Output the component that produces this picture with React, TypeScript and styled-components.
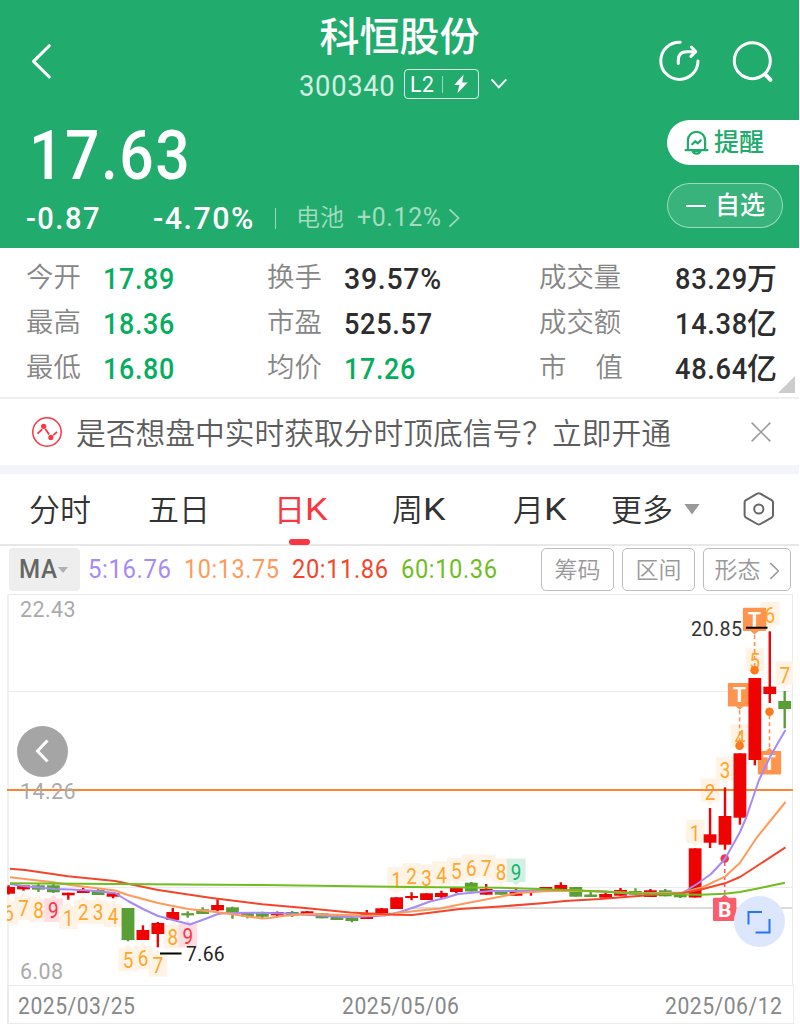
import React, { useLayoutEffect, useRef, useState } from 'react';
import styled, { createGlobalStyle } from 'styled-components';

const FONT = "Roboto, 'Noto Sans CJK SC', sans-serif";
const GREEN = '#21ab6d';

const GlobalStyle = createGlobalStyle`
  *, *::before, *::after { box-sizing: border-box; }
  body { margin: 0; background: #fff; font-family: ${FONT}; }
`;

/* ---------- condensed text ---------- */

const FitBox = styled.span<{ $w: number; $size: number; $weight: number; $color: string }>`
  display: inline-block;
  flex: none;
  width: ${(p) => p.$w}px;
  font-size: ${(p) => p.$size}px;
  font-weight: ${(p) => p.$weight};
  line-height: ${(p) => Math.round(p.$size * 1.2)}px;
  color: ${(p) => p.$color};
  white-space: nowrap;
`;

const FitInner = styled.span<{ $gap: number }>`
  display: inline-block;
  letter-spacing: ${(p) => p.$gap}px;
  transform-origin: 0 50%;
`;

interface FitProps {
  w: number;
  size: number;
  weight?: number;
  color?: string;
  spacing?: number;
  children: React.ReactNode;
}

/* Squeezes its text horizontally so that it fills exactly `w` pixels. */
function Fit({ w, size, weight = 400, color = 'inherit', spacing = 0.025, children }: FitProps) {
  const ref = useRef<HTMLSpanElement>(null);
  const [scale, setScale] = useState(1);
  const gap = spacing * size;
  useLayoutEffect(() => {
    if (ref.current && ref.current.offsetWidth) setScale(w / (ref.current.offsetWidth - gap));
  }, [w, gap]);
  return (
    <FitBox $w={w} $size={size} $weight={weight} $color={color}>
      <FitInner ref={ref} $gap={gap} style={{ transform: `scaleX(${scale})` }}>
        {children}
      </FitInner>
    </FitBox>
  );
}

/* ---------- page ---------- */

const Page = styled.main`
  width: 799px;
  height: 1024px;
  overflow: hidden;
  display: flex;
  flex-direction: column;
  background: #fff;
`;

const Header = styled.header`
  height: 248px;
  flex: none;
  background: ${GREEN};
  color: #fff;
`;

const TopBar = styled.div`
  height: 112px;
  display: grid;
  grid-template-columns: 1fr 210px 1fr;
  padding: 0 24px 0 28px;
`;

const BackSlot = styled.div`
  padding-top: 42px;
`;

const TitleBlock = styled.div`
  display: flex;
  flex-direction: column;
  align-items: flex-start;
  padding-left: 2px;
`;

const StockName = styled.h1`
  margin: 15px 0 0 21px;
  font-size: 40px;
  line-height: 46px;
  font-weight: 500;
  white-space: nowrap;
`;

const CodeRow = styled.div`
  display: flex;
  align-items: center;
  height: 30px;
  margin-top: 8px;
`;

const StockCode = styled.span`
  margin-top: 3px;
`;

const LevelBadge = styled.span`
  display: flex;
  align-items: center;
  width: 75px;
  height: 30px;
  margin: 0 11px 0 9px;
  padding-left: 5px;
  border: 1px solid rgba(255, 255, 255, 0.85);
  border-radius: 4px;
`;

const TopActions = styled.div`
  display: flex;
  justify-content: flex-end;
  gap: 28px;
  padding-top: 38px;
`;

const QuoteArea = styled.div`
  display: flex;
  justify-content: space-between;
`;

const PriceBlock = styled.div`
  display: flex;
  flex-direction: column;
`;

const PriceLine = styled.div`
  height: 84px;
  padding: 2px 0 0 29px;
`;

const ChangeLine = styled.div`
  display: flex;
  align-items: center;
  height: 44px;
  padding-left: 26px;
`;

const Change = styled.span`
  width: 127px;
`;

const ThinBar = styled.i<{ $h: number; $ml: number; $mr: number }>`
  width: 1px;
  height: ${(p) => p.$h}px;
  margin: 0 ${(p) => p.$mr}px 0 ${(p) => p.$ml}px;
  background: rgba(255, 255, 255, 0.55);
`;

const Sector = styled.span`
  display: flex;
  align-items: center;
  gap: 13px;
  margin-right: 7px;
  color: #a3dcc1;
`;

const SectorName = styled.span`
  font-size: 24px;
  line-height: 30px;
  font-weight: 350;
  margin-top: -1px;
`;

const PillColumn = styled.div`
  display: flex;
  flex-direction: column;
  gap: 18px;
  width: 132px;
  padding-top: 8px;
`;

const Pill = styled.button<{ $solid?: boolean }>`
  display: flex;
  align-items: center;
  width: ${(p) => (p.$solid ? 132 : 116)}px;
  height: 45px;
  padding: 0 0 0 ${(p) => (p.$solid ? 17 : 18)}px;
  gap: ${(p) => (p.$solid ? 5 : 9)}px;
  border: ${(p) => (p.$solid ? 'none' : '1px solid rgba(255,255,255,0.5)')};
  border-radius: ${(p) => (p.$solid ? '23px 0 0 23px' : '23px')};
  background: ${(p) => (p.$solid ? '#fff' : 'rgba(255,255,255,0.1)')};
  color: ${(p) => (p.$solid ? GREEN : '#fff')};
  font: 500 25px/45px ${FONT};
  white-space: nowrap;
`;

/* ---------- statistics ---------- */

const Stats = styled.section`
  position: relative;
  display: grid;
  grid-template-columns: 241px 272px 240px;
  grid-auto-rows: 45px;
  height: 151px;
  flex: none;
  padding: 8px 0 0 26px;
  border-bottom: 2px solid #efefef;
`;

const Stat = styled.div`
  display: flex;
  align-items: center;
`;

const StatLabel = styled.span<{ $wide?: boolean }>`
  display: flex;
  justify-content: space-between;
  width: ${(p) => (p.$wide ? 84 : 55)}px;
  margin-top: -1px;
  font-size: 27.4px;
  line-height: 36px;
  font-weight: 350;
  color: #868686;
`;

const StatValue = styled.span<{ $right?: boolean; $down?: boolean }>`
  display: flex;
  align-items: center;
  margin-left: ${(p) => (p.$right ? 52 : 22)}px;
  color: ${(p) => (p.$down ? '#07ad5e' : '#2d2d2d')};
  font-size: 30px;
  line-height: 36px;
  font-weight: 500;
`;

const Corner = styled.i`
  position: absolute;
  right: 4px;
  bottom: 4px;
  width: 17px;
  height: 17px;
  background: #ccc;
  clip-path: polygon(100% 0, 100% 100%, 0 100%);
`;

/* ---------- notice ---------- */

const Notice = styled.section`
  display: flex;
  align-items: center;
  height: 75px;
  flex: none;
  padding: 0 27px 0 31px;
  border-bottom: 9px solid #f2f4f9;
`;

const NoticeText = styled.p`
  margin: 3px auto 0 13px;
  font-size: 29.75px;
  line-height: 40px;
  font-weight: 350;
  color: #5c5c5c;
  white-space: nowrap;
`;

/* ---------- tabs ---------- */

const Tabs = styled.nav`
  display: grid;
  grid-template-columns: 119px 126px 118px 121px 98px 1fr 34px;
  height: 72px;
  flex: none;
  padding: 0 23px 0 29px;
  border-bottom: 2px solid #e8e8e8;
`;

const Tab = styled.span<{ $active?: boolean }>`
  position: relative;
  display: flex;
  align-items: center;
  height: 70px;
  font-size: 31px;
  font-weight: ${(p) => (p.$active ? 400 : 350)};
  color: ${(p) => (p.$active ? '#f93641' : '#333')};
  white-space: nowrap;
`;

const Underline = styled.i`
  position: absolute;
  left: 15px;
  bottom: -1px;
  width: 21px;
  height: 6px;
  border-radius: 3px;
  background: #f93641;
`;

const TabLabel = styled.span`
  line-height: 40px;
  margin-top: 3px;
`;

const Down = styled.i<{ $w: number; $h: number; $ml: number; $color: string }>`
  width: ${(p) => p.$w}px;
  height: ${(p) => p.$h}px;
  margin-left: ${(p) => p.$ml}px;
  background: ${(p) => p.$color};
  clip-path: polygon(0 0, 100% 0, 50% 100%);
`;

/* ---------- indicator row ---------- */

const Indicators = styled.div`
  display: flex;
  align-items: center;
  height: 48px;
  flex: none;
  padding: 0 8px 2px 9px;
`;

const MaButton = styled.span`
  display: flex;
  align-items: center;
  width: 71px;
  height: 43px;
  margin-right: 8px;
  padding: 2px 0 0 10px;
  border-radius: 4px;
  background: #eee;
`;

const MaValues = styled.div`
  display: flex;
  gap: 13px;
  flex: 1;
  padding-top: 1px;
`;

const Tools = styled.div`
  display: flex;
  gap: 8px;
`;

const Tool = styled.button<{ $w: number }>`
  display: flex;
  align-items: center;
  justify-content: center;
  gap: 8px;
  width: ${(p) => p.$w}px;
  height: 43px;
  padding: 3px 0 0;
  border: 1.5px solid #bdbdbd;
  border-radius: 5px;
  background: #fff;
  font: 350 23px/38px ${FONT};
  color: #999;
  white-space: nowrap;
`;

/* ---------- chart ---------- */

const ChartArea = styled.section`
  position: relative;
  height: 391px;
  flex: none;
`;

const RoundButton = styled.button<{ $x: number; $y: number; $bg: string }>`
  position: absolute;
  left: ${(p) => p.$x}px;
  top: ${(p) => p.$y}px;
  display: grid;
  place-items: center;
  width: 51px;
  height: 51px;
  padding: 0;
  border: none;
  border-radius: 50%;
  background: ${(p) => p.$bg};
`;

const DateRow = styled.div`
  display: flex;
  align-items: center;
  justify-content: space-between;
  height: 39px;
  margin: 0 5px 0 7px;
  padding: 3px 11px 0 9px;
  border: 1px solid #ebebeb;
  border-left-width: 2px;
`;

type Candle = [up: 0 | 1, top: number, bottom: number, high: number, low: number];

const candles: Candle[] = [
  [1, 887, 893.7, 885.3, 894.5], [1, 885.3, 889.3, 885, 890.7], [0, 885.3, 889.7, 883.3, 892],
  [0, 885.3, 892.3, 882.3, 893], [1, 892.7, 895.3, 892.7, 899.7], [1, 890.7, 893, 887.7, 893],
  [0, 890, 895, 889, 895], [1, 893.3, 896.7, 893, 898.3], [0, 908, 940, 908, 941.3],
  [1, 930, 940, 925.3, 940], [1, 923, 934, 922, 947.3], [1, 912, 920, 908, 920],
  [0, 913.2, 915.4, 911.3, 917.7], [0, 909.3, 914, 907.3, 914], [1, 905, 910.3, 899.3, 911],
  [0, 907.3, 912.7, 906.7, 918.7], [0, 912.7, 916.7, 912, 918.3], [0, 913.3, 916.7, 911.7, 918.7],
  [1, 912, 915.3, 911.5, 917.3], [0, 912, 915.7, 911, 917], [1, 911.3, 914.7, 911, 915],
  [0, 913.3, 918.3, 913, 918.3], [0, 915.7, 920, 915, 920], [0, 917.7, 921, 917, 922.3],
  [1, 914, 919, 910, 919], [1, 908.3, 913.3, 908, 914.7], [1, 897.3, 909, 897.3, 909],
  [1, 896, 898, 892.3, 900.3], [1, 893.3, 900, 893.3, 900], [1, 893, 897, 890.7, 898.3],
  [1, 887.7, 892, 887.7, 893.3], [0, 882.7, 891.5, 882, 891.5], [1, 889, 894.7, 884, 894.7],
  [0, 890.3, 894.7, 890, 894.7], [1, 890, 895.7, 887.7, 895.7], [1, 891, 893, 891, 895.7],
  [1, 887, 889.3, 887, 889.3], [1, 885, 889.3, 882.3, 889.3], [0, 887, 896.7, 887, 896.7],
  [0, 894.5, 897, 890.7, 897], [1, 894, 897.7, 892.7, 897.7], [1, 890, 895.7, 888, 895.7],
  [0, 891, 894.7, 888.3, 894.7], [1, 890.3, 897, 889, 897], [0, 890.3, 896.3, 889, 896.3],
  [0, 894.3, 897.3, 894, 898], [1, 848.3, 897.5, 848.3, 897.5], [1, 834.3, 842.7, 808, 848],
  [1, 816, 844.7, 787.3, 849.7], [1, 753.3, 817.7, 753.3, 824.7], [1, 678, 760, 678, 765.3],
  [1, 686.7, 694, 631.3, 703], [0, 701, 709, 691, 728.3],
];

const candleX = (i: number) => 8.6 + 14.925 * i;

const averages = [
  {
    color: '#a58af8',
    points:
      '10,884 23,886 55,889 70,889.5 90,890.5 115,893 128,901 143,909 158,916 175,920.5 190,924.5 205,919 218,914 228,913 262,912.7 285,913.5 310,915 345,917 365,916.5 385,915.5 400,912 415,907 430,901.5 445,898 458,894 475,892.5 490,891 545,891 600,891 628,893.5 683,892.5 697,884 711,874 725,859 740,832 746,818 759,780 771,755 785.5,730',
  },
  {
    color: '#ff9a5a',
    points:
      '10,877.3 55,882.5 70,885 115,890.5 128,895 158,903 188,909 218,912.3 245,916 262,918.5 270,918 282,916 308,914 345,915 365,915.5 385,914.7 415,911 440,908.5 470,902.5 500,896.7 518,893 545,891.3 575,890.8 600,891.5 650,893.5 682,892.7 703,887 725,876.7 740,862.7 757,837.3 785.5,802',
  },
  {
    color: '#f4452a',
    points:
      '10,868.7 25,870 68,876.3 115,881 158,890 210,897.7 262,904.3 305,908 350,912.5 395,914.7 412,915 440,911.5 460,909 500,906.5 545,903 565,901 600,899 625,897 655,894.7 682,893.3 703,889 725,883.3 740,877 757,866 785.5,847.3',
  },
  {
    color: '#6ebe1e',
    points: '10,883.3 262,885 410,887 500,887.7 545,889.3 580,890.5 640,893.5 700,894.7 725,893.7 740,892 765,887 785,882.7',
  },
];

type Tone = 'o' | 'r' | 'g';
type Tag = [index: number, label: string, y: number, above: 0 | 1, tone?: Tone];

const tags: Tag[] = [
  [0, '6', 913.5, 0], [1, '7', 908.7, 0], [2, '8', 910.7, 0], [3, '9', 910.7, 0, 'r'],
  [4, '1', 918, 0], [5, '2', 912.2, 0], [6, '3', 912.7, 0], [7, '4', 916, 0],
  [8, '5', 960, 0], [9, '6', 958.3, 0], [10, '7', 965.5, 0], [11, '8', 937.3, 0], [12, '9', 936, 0, 'r'],
  [26, '1', 880.8, 1], [27, '2', 876.7, 1], [28, '3', 878, 1], [29, '4', 875, 1], [30, '5', 871.3, 1],
  [31, '6', 868, 1], [32, '7', 868, 1], [33, '8', 872.3, 1], [34, '9', 872.3, 1, 'g'],
  [46, '1', 833.3, 1], [47, '2', 792.3, 1], [48, '3', 770.7, 1], [49, '4', 738, 1],
  [50, '5', 661.5, 1], [51, '6', 615.7, 1], [52, '7', 675, 1],
];

const tones: Record<Tone, { fg: string; bg: string }> = {
  o: { fg: '#ffa62b', bg: '#fff3e6' },
  r: { fg: '#f9364a', bg: '#ffdde0' },
  g: { fg: '#17b36b', bg: '#d2f0e2' },
};

function CountTag({ tag: [index, label, y, above, tone = 'o'] }: { tag: Tag }) {
  const x = candleX(index);
  const mid = above ? y - 2 : y - 0.5;
  const tip = above
    ? `M${x - 4} ${mid + 11.5}h8l-4 4z`
    : `M${x - 4} ${mid - 11.5}h8l-4 -4z`;
  return (
    <g>
      <rect x={x - 9.3} y={mid - 11.7} width={18.8} height={23.4} fill={tones[tone].bg} />
      <path d={tip} fill={tones[tone].bg} />
      <text
        x={x - 5.3}
        y={y + 7.6}
        fontSize={21.5}
        textLength={10.6}
        lengthAdjust="spacingAndGlyphs"
        fill={tones[tone].fg}
      >
        {label}
      </text>
    </g>
  );
}

interface TradeProps {
  x: number;
  y: number;
  dotY: number;
  label: string;
  color: string;
  dot: string;
}

function TradeMark({ x, y, dotY, label, color, dot }: TradeProps) {
  const below = dotY > y;
  const edge = below ? y + 11.5 : y - 11.5;
  return (
    <g>
      <line x1={x} y1={edge + (below ? 4 : -4)} x2={x} y2={dotY} stroke={color} strokeWidth={1.6} strokeDasharray="4 3" />
      <rect x={x - 11.7} y={y - 11.7} width={23.4} height={23.4} rx={1} fill={color} />
      <path d={below ? `M${x - 4} ${edge}h8l-4 3.5z` : `M${x - 4} ${edge}h8l-4 -3.5z`} fill={color} />
      <text x={x} y={y + 7.4} fontSize={21} fontWeight={700} textAnchor="middle" fill="#fff">
        {label}
      </text>
      <circle cx={x} cy={dotY} r={4.3} fill={dot} />
    </g>
  );
}

interface ChartTextProps {
  x: number;
  y: number;
  w: number;
  size: number;
  color: string;
  children: string;
}

function ChartText({ x, y, w, size, color, children }: ChartTextProps) {
  return (
    <text
      x={x}
      y={y}
      fontSize={size}
      letterSpacing={size * 0.02}
      textLength={w}
      lengthAdjust="spacingAndGlyphs"
      fill={color}
    >
      {children}
    </text>
  );
}

function KLineChart() {
  return (
    <svg width="799" height="391" viewBox="0 594 799 391" fontFamily={FONT} style={{ display: 'block' }}>
      <defs>
        <clipPath id="plot">
          <rect x="7" y="594" width="786" height="391" />
        </clipPath>
      </defs>
      <path d="M7 594.5H793M7 691.5H793M7 887.5H793" stroke="#ebebeb" fill="none" />
      <path d="M8 594V985" stroke="#f0f0f0" strokeWidth="2" />
      <path d="M792.5 594V985" stroke="#ebebeb" />
      <path d="M412 908H792" stroke="#dcdcdc" strokeWidth="1.8" />

      <ChartText x={20} y={617.3} w={56} size={22.5} color="#aaa">22.43</ChartText>
      <ChartText x={20} y={979} w={43.5} size={22.5} color="#aaa">6.08</ChartText>

      <g clipPath="url(#plot)">
        {tags.map((tag) => (
          <CountTag key={tag[0]} tag={tag} />
        ))}
        <TradeMark x={754.6} y={619.4} dotY={670.3} label="T" color="#ff944f" dot="#fb7a1e" />
        <TradeMark x={739.6} y={694.8} dotY={745.8} label="T" color="#ff944f" dot="#fb7a1e" />
        <TradeMark x={769.5} y={762.8} dotY={711.7} label="T" color="#ff944f" dot="#fb7a1e" />
        <TradeMark x={724.7} y={909.4} dotY={858.5} label="B" color="#fa5d6b" dot="#f4364c" />

        <path d="M7 790H793" stroke="#fd8532" strokeWidth="2.2" />
        {candles.map(([up, top, bottom, high, low], i) => {
          const x = candleX(i);
          const color = up ? '#ee0202' : '#5a9e36';
          const half = i === 35 ? 3 : 6.4;
          return (
            <g key={i} fill={color}>
              <rect x={x - half} y={top} width={half * 2} height={bottom - top} />
              <rect x={x - 1.2} y={high} width={2.4} height={low - high} />
            </g>
          );
        })}
        {averages.map((line) => (
          <polyline
            key={line.color}
            points={line.points}
            fill="none"
            stroke={line.color}
            strokeWidth="2"
            strokeLinejoin="round"
          />
        ))}
      </g>

      <path d="M746 627.8H767.5M160 953.4H181.5" stroke="#000" strokeWidth="2" />
      <ChartText x={691} y={636.4} w={51.5} size={20.8} color="#333">20.85</ChartText>
      <ChartText x={186} y={961} w={39} size={20.8} color="#222">7.66</ChartText>
      <ChartText x={20} y={798.5} w={56} size={22.5} color="#aaa">14.26</ChartText>
    </svg>
  );
}

/* ---------- icons ---------- */

const BackIcon = () => (
  <svg width="26" height="40" viewBox="0 0 26 40" fill="none" stroke="#fff" strokeWidth="3" strokeLinecap="round" strokeLinejoin="round">
    <path d="M21.3 3.7 5.5 19.4 21.3 35" />
  </svg>
);

const ShareIcon = () => (
  <svg width="44" height="44" viewBox="0 0 44 44" fill="none" stroke="#fff" strokeWidth="3" strokeLinecap="round" strokeLinejoin="round">
    <path d="M23.2 4.2A18.6 18.6 0 1 0 41 23" />
    <path d="M21.3 25.4v-3.2c0-5.6 3.4-8.4 8.6-8.4h8" />
    <path d="m34.3 9 4.4 4.6-4.8 4.8" />
  </svg>
);

const SearchIcon = () => (
  <svg width="46" height="46" viewBox="0 0 46 46" fill="none" stroke="#fff" strokeWidth="3" strokeLinecap="round">
    <circle cx="23.3" cy="22.7" r="18" />
    <path d="m36.2 36.4 5.3 5.5" strokeWidth="4" />
  </svg>
);

const BoltIcon = () => (
  <svg width="16" height="20" viewBox="0 0 16 20">
    <path d="M10.6.6 1.2 11h5.2l-2 8.2L14.6 8.4H9.2z" fill="#fff" />
  </svg>
);

const ChevronDown = () => (
  <svg width="18" height="14" viewBox="0 0 18 14" fill="none" stroke="#fff" strokeWidth="2">
    <path d="m1.5 2.4 7.3 8 7.5-8" />
  </svg>
);

const ChevronRight = ({ color, h = 20 }: { color: string; h?: number }) => (
  <svg width={h * 0.6} height={h} viewBox="0 0 12 20" fill="none" stroke={color} strokeWidth="1.7">
    <path d="m1.5 1.3 9 8.7-9 8.7" />
  </svg>
);

const BellIcon = () => (
  <svg width="25" height="26" viewBox="0 0 25 26" fill="none" stroke={GREEN} strokeWidth="2.2" strokeLinecap="round" strokeLinejoin="round">
    <path d="M1.6 20.2h21.8M3.9 19.8V10.4a8.6 8.6 0 0 1 17.2 0v9.4" />
    <path d="M8.6 20.8c.6 3.7 7.2 3.7 7.8 0z" />
    <path d="m8.3 14.2 3-3 2.4 2.2 3-3" />
  </svg>
);

const SignalIcon = () => (
  <svg width="32" height="32" viewBox="0 0 32 32" fill="none" stroke="#f93641" strokeWidth="1.5">
    <circle cx="16" cy="16" r="14.2" />
    <path d="m6.6 17.7 4.6-4.5M14.2 12.8l3.9 5.8M22.3 19.2l3.8-3.4" strokeWidth="1.8" />
    <circle cx="12.7" cy="10.3" r="2.6" fill="#f93641" stroke="none" />
    <circle cx="19.9" cy="21.4" r="2.6" fill="#f93641" stroke="none" />
  </svg>
);

const CloseIcon = () => (
  <svg width="22" height="22" viewBox="0 0 22 22" fill="none" stroke="#999" strokeWidth="1.5">
    <path d="m1.6 1.6 18.8 18.8M20.4 1.6 1.6 20.4" />
  </svg>
);

const SettingsIcon = () => (
  <svg width="34" height="36" viewBox="0 0 34 36" fill="none" stroke="#666" strokeWidth="2" strokeLinejoin="round">
    <path d="M16.8 2.2c.7 0 1 .2 1.6.5l11.2 6.4c1 .6 1.4 1.2 1.4 2.2v13c0 1.2-.4 1.7-1.4 2.3l-11.2 6.4c-1 .6-2.2.6-3.2 0L4 26.6c-1-.6-1.4-1.2-1.4-2.3v-13c0-1 .4-1.6 1.4-2.2l11.2-6.4c.6-.3.9-.5 1.6-.5z" />
    <circle cx="16.8" cy="18" r="4.6" />
  </svg>
);

/* ---------- data ---------- */

const stats = [
  { label: '今开', value: '17.89', w: 71, down: true },
  { label: '换手', value: '39.57%', w: 97 },
  { label: '成交量', value: '83.29', w: 72, unit: '万' },
  { label: '最高', value: '18.36', w: 71, down: true },
  { label: '市盈', value: '525.57', w: 88 },
  { label: '成交额', value: '14.38', w: 72, unit: '亿' },
  { label: '最低', value: '16.80', w: 71, down: true },
  { label: '均价', value: '17.26', w: 71, down: true },
  { label: '市值', value: '48.64', w: 72, unit: '亿' },
];

const maValues = [
  { text: '5:16.76', w: 83, color: '#a58af8' },
  { text: '10:13.75', w: 95, color: '#ff9a5a' },
  { text: '20:11.86', w: 96, color: '#f4452a' },
  { text: '60:10.36', w: 96, color: '#6ebe1e' },
];

export default function App() {
  return (
    <Page>
      <GlobalStyle />
      <Header>
        <TopBar>
          <BackSlot>
            <BackIcon />
          </BackSlot>
          <TitleBlock>
            <StockName>科恒股份</StockName>
            <CodeRow>
              <StockCode>
                <Fit w={96} size={30} color="#d3eee2">300340</Fit>
              </StockCode>
              <LevelBadge>
                <Fit w={24} size={22.5}>L2</Fit>
                <ThinBar $h={17} $ml={8} $mr={10} />
                <BoltIcon />
              </LevelBadge>
              <ChevronDown />
            </CodeRow>
          </TitleBlock>
          <TopActions>
            <ShareIcon />
            <SearchIcon />
          </TopActions>
        </TopBar>
        <QuoteArea>
          <PriceBlock>
            <PriceLine>
              <Fit w={161} size={69} weight={500}>17.63</Fit>
            </PriceLine>
            <ChangeLine>
              <Change>
                <Fit w={73} size={30.5} weight={500} spacing={0.05}>-0.87</Fit>
              </Change>
              <Fit w={100} size={30.5} weight={500} spacing={0.05}>-4.70%</Fit>
              <ThinBar $h={21} $ml={22} $mr={20} />
              <Sector>
                <SectorName>电池</SectorName>
                <Fit w={84} size={25}>+0.12%</Fit>
              </Sector>
              <ChevronRight color="#a3dcc1" />
            </ChangeLine>
          </PriceBlock>
          <PillColumn>
            <Pill $solid>
              <BellIcon />
              提醒
            </Pill>
            <Pill>
              <svg width="20" height="2" viewBox="0 0 20 2">
                <path d="M0 1h20" stroke="#fff" strokeWidth="2" />
              </svg>
              自选
            </Pill>
          </PillColumn>
        </QuoteArea>
      </Header>

      <Stats>
        {stats.map((s) => (
          <Stat key={s.label}>
            <StatLabel $wide={!!s.unit}>
              {s.label === '市值' ? (
                <>
                  <span>市</span>
                  <span>值</span>
                </>
              ) : (
                s.label
              )}
            </StatLabel>
            <StatValue $right={!!s.unit} $down={s.down}>
              <Fit w={s.w} size={30} weight={500}>{s.value}</Fit>
              {s.unit}
            </StatValue>
          </Stat>
        ))}
        <Corner />
      </Stats>

      <Notice>
        <SignalIcon />
        <NoticeText>是否想盘中实时获取分时顶底信号？立即开通</NoticeText>
        <CloseIcon />
      </Notice>

      <Tabs>
        <Tab>
          <TabLabel>分时</TabLabel>
        </Tab>
        <Tab>
          <TabLabel>五日</TabLabel>
        </Tab>
        <Tab $active>
          <TabLabel>日</TabLabel>
          <Fit w={22} size={31} spacing={0}>K</Fit>
          <Underline />
        </Tab>
        <Tab>
          <TabLabel>周</TabLabel>
          <Fit w={22} size={31} spacing={0}>K</Fit>
        </Tab>
        <Tab>
          <TabLabel>月</TabLabel>
          <Fit w={22} size={31} spacing={0}>K</Fit>
        </Tab>
        <Tab>
          <TabLabel>更多</TabLabel>
          <Down $w={16} $h={11} $ml={11} $color="#999" />
        </Tab>
        <Tab>
          <SettingsIcon />
        </Tab>
      </Tabs>

      <Indicators>
        <MaButton>
          <Fit w={38} size={25} weight={500} color="#666">MA</Fit>
          <Down $w={10} $h={6} $ml={1} $color="#b0b0b0" />
        </MaButton>
        <MaValues>
          {maValues.map((m) => (
            <Fit key={m.text} w={m.w} size={25.5} color={m.color}>{m.text}</Fit>
          ))}
        </MaValues>
        <Tools>
          <Tool $w={73}>筹码</Tool>
          <Tool $w={73}>区间</Tool>
          <Tool $w={88}>
            形态
            <ChevronRight color="#999" h={18} />
          </Tool>
        </Tools>
      </Indicators>

      <ChartArea>
        <KLineChart />
        <RoundButton $x={17} $y={131.5} $bg="#a5a5a5">
          <svg width="18" height="26" viewBox="0 0 18 26" fill="none" stroke="#fff" strokeWidth="3">
            <path d="M13.5 2.5 3.5 13l10 10.5" />
          </svg>
        </RoundButton>
        <RoundButton $x={733.5} $y={302} $bg="#dce7fe">
          <svg width="26" height="24" viewBox="0 0 26 24" fill="none" stroke="#2475fb" strokeWidth="2">
            <path d="M2.5 14.5V2h13.500M23.5 9v13.500h-14" />
          </svg>
        </RoundButton>
      </ChartArea>

      <DateRow>
        <Fit w={117} size={23.5} color="#888">2025/03/25</Fit>
        <Fit w={117} size={23.5} color="#888">2025/05/06</Fit>
        <Fit w={117} size={23.5} color="#888">2025/06/12</Fit>
      </DateRow>
    </Page>
  );
}
